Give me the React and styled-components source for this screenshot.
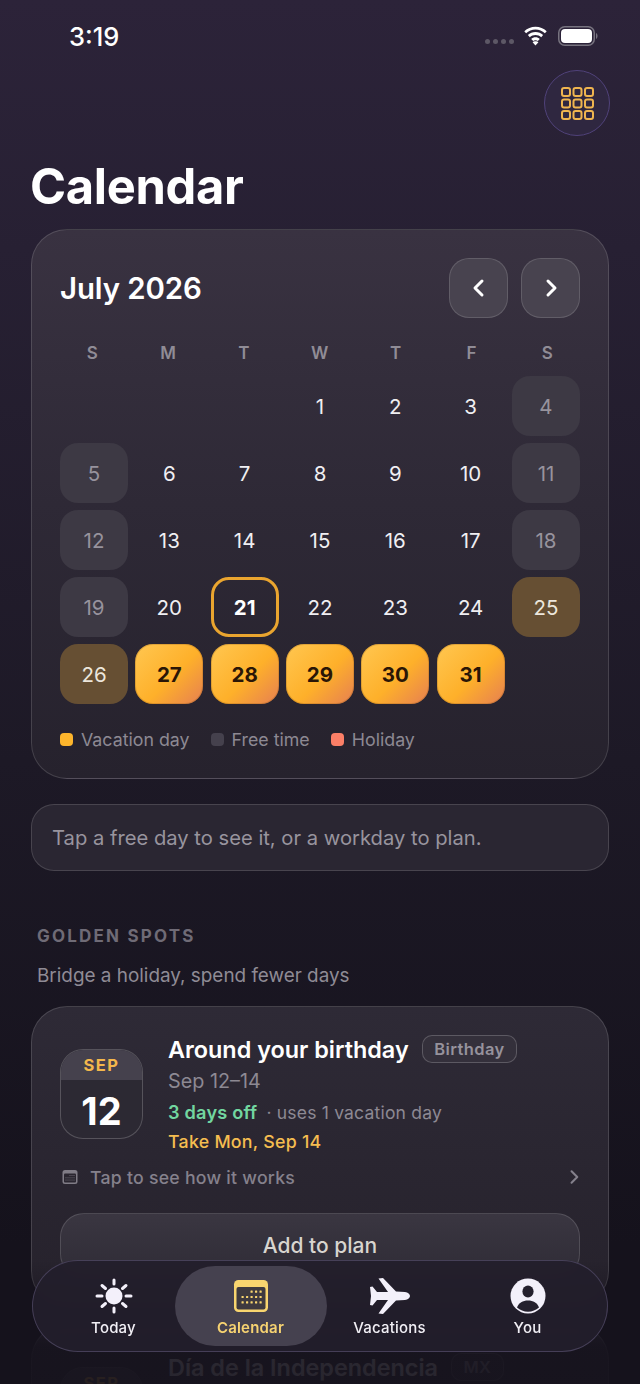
import React from "react";
import styled, { createGlobalStyle } from "styled-components";

const Global = createGlobalStyle`
  html, body { margin: 0; padding: 0; background: #15121c; }
  body { font-family: Inter, "Noto Sans", sans-serif; -webkit-font-smoothing: antialiased; }
  * { box-sizing: border-box; }
`;

const Page = styled.div`
  position: relative;
  width: 640px;
  height: 1384px;
  overflow: hidden;
  padding: 0 31px;
  background: linear-gradient(180deg, #2c2339 0%, #272033 18%, #1d1926 55%, #15121c 90%);
  color: #fff;
`;

const StatusBar = styled.div`
  height: 70px;
  margin: 0 -31px;
  padding: 2px 42px 0 69px;
  display: flex;
  align-items: center;
  justify-content: space-between;
`;
const Clock = styled.span`
  font-size: 25.5px;
  font-weight: 500;
  color: #fff;
`;
const StatusIcons = styled.div`
  display: flex;
  align-items: center;
  margin-top: -1px;
`;
const Dots = styled.div`
  display: flex;
  gap: 3px;
  margin: 12px 9px 0 0;
  i { width: 5px; height: 5px; border-radius: 50%; background: #5d5866; }
`;
const IconGap = styled.span`
  width: 10px;
`;

const HeaderRow = styled.div`
  display: flex;
  justify-content: flex-end;
  margin-right: -1px;
`;
const RoundButton = styled.div`
  width: 66px;
  height: 66px;
  border-radius: 50%;
  background: #2f2740;
  border: 1.5px solid #50427a;
  display: flex;
  align-items: center;
  justify-content: center;
`;
const Title = styled.h1`
  margin: 20px 0 11px -1px;
  font-size: 48.8px;
  line-height: 62px;
  height: 62px;
  font-weight: 700;
  letter-spacing: -0.3px;
`;

const Card = styled.section`
  border-radius: 36px;
  border: 1.5px solid rgba(255, 255, 255, 0.14);
  background: linear-gradient(180deg, #393241 0%, #2e2936 50%, #26222d 100%);
`;
const CalendarCard = styled(Card)`
  height: 550px;
  padding: 28px 28px 0;
`;
const MonthRow = styled.div`
  display: flex;
  align-items: center;
  justify-content: space-between;
  height: 60px;
`;
const Month = styled.h2`
  margin: 0;
  font-size: 29.4px;
  font-weight: 600;
  letter-spacing: -0.1px;
`;
const NavGroup = styled.div`
  display: flex;
  gap: 13px;
`;
const NavButton = styled.div`
  width: 59px;
  height: 60px;
  border-radius: 20px;
  background: #48434f;
  border: 1.5px solid rgba(255, 255, 255, 0.14);
  display: flex;
  align-items: center;
  justify-content: center;
`;
const Grid = styled.div`
  display: grid;
  grid-template-columns: repeat(7, 68px);
  column-gap: 7.33px;
`;
const WeekRow = styled(Grid)`
  column-gap: 7.83px;
  margin-left: -1.5px;
`;
const Weekday = styled.div`
  height: 58px;
  padding-top: 12px;
  display: flex;
  align-items: center;
  justify-content: center;
  font-size: 17px;
  font-weight: 600;
  color: #908c96;
  letter-spacing: 0.4px;
`;
const Days = styled(Grid)`
  row-gap: 7px;
`;
const cellStyles = {
  work: `color:#f0eff2;`,
  free: `background:#3d3944;color:#97939d;`,
  today: `border:3px solid #eaa52f;color:#fff;font-weight:700;`,
  offVac: `background:#664f33;color:#ece6dc;`,
  vac: `background:linear-gradient(135deg,#ffc751 0%,#feb02a 55%,#e67f52 100%);color:#2a1606;font-weight:700;box-shadow:inset 0 0 0 1px rgba(130,80,20,.25);`,
  empty: ``,
};
const Cell = styled.div`
  height: 60px;
  border-radius: 18px;
  display: flex;
  align-items: center;
  justify-content: center;
  font-size: 20.5px;
  ${(p) => cellStyles[p.$kind]}
`;
const Legend = styled.div`
  display: flex;
  align-items: center;
  margin-top: 24px;
  height: 22px;
`;
const LegendItem = styled.div`
  display: flex;
  align-items: center;
  gap: 8px;
  margin-right: 21px;
  font-size: 17.8px;
  color: #8d8993;
  &::before {
    content: "";
    width: 13px;
    height: 13px;
    border-radius: 4px;
    background: ${(p) => p.$color};
  }
`;
const Tip = styled.div`
  margin-top: 25px;
  height: 67px;
  border-radius: 23px;
  border: 1.5px solid rgba(255, 255, 255, 0.14);
  background: #2a2632;
  padding: 0 20px;
  display: flex;
  align-items: center;
  font-size: 20.2px;
  color: #98949e;
`;
const SectionLabel = styled.div`
  margin: 54px 0 0 6px;
  height: 22px;
  line-height: 22px;
  font-size: 17px;
  font-weight: 700;
  letter-spacing: 2.2px;
  color: #6f6b76;
`;
const SectionSub = styled.div`
  margin: 18px 0 19px 6px;
  height: 22px;
  line-height: 22px;
  font-size: 18.9px;
  color: #8f8b95;
`;
const SpotCard = styled(Card)`
  background: linear-gradient(180deg, #2e2a36 0%, #26222c 100%);
  padding: 26px 28px 28px;
  margin-bottom: 17px;
`;
const SpotTop = styled.div`
  display: flex;
  gap: 25px;
`;
const Tile = styled.div`
  margin-top: 16px;
  width: 83px;
  height: 90px;
  flex: none;
  border-radius: 23px;
  border: 1.5px solid rgba(255, 255, 255, 0.2);
  background: #2c2933;
  overflow: hidden;
  display: flex;
  flex-direction: column;
  align-items: center;
`;
const TileHead = styled.div`
  width: 100%;
  height: 30px;
  background: #45414d;
  color: #f4b84c;
  font-size: 16.5px;
  font-weight: 700;
  letter-spacing: 1.5px;
  display: flex;
  align-items: center;
  justify-content: center;
`;
const TileNum = styled.div`
  flex: 1;
  display: flex;
  align-items: center;
  padding-top: 3px;
  font-size: 38px;
  font-weight: 700;
  color: #fff;
`;
const SpotInfo = styled.div`
  display: flex;
  flex-direction: column;
`;
const TitleRow = styled.div`
  display: flex;
  align-items: center;
  gap: 13px;
  height: 32px;
`;
const SpotTitle = styled.div`
  font-size: 23.4px;
  font-weight: 600;
  color: #fff;
  white-space: nowrap;
`;
const Badge = styled.span`
  height: 28px;
  padding: 0 11.5px;
  border-radius: 10px;
  border: 1.5px solid rgba(255, 255, 255, 0.2);
  background: #34303b;
  display: flex;
  align-items: center;
  font-size: 16.5px;
  font-weight: 600;
  color: #96929c;
  letter-spacing: 0.4px;
`;
const Dates = styled.div`
  margin-top: 3px;
  font-size: 19.8px;
  line-height: 26px;
  color: #8d8993;
`;
const StatLine = styled.div`
  margin-top: 5px;
  line-height: 26px;
  font-size: 17.5px;
  color: #8d8993;
  letter-spacing: 0.2px;
  b { font-size: 18.2px; font-weight: 600; color: #72d6a0; margin-right: 9px; }
`;
const TakeLine = styled.div`
  margin-top: 3px;
  line-height: 26px;
  font-size: 17.8px;
  font-weight: 500;
  color: #f5bd50;
  letter-spacing: 0.25px;
`;
const HowRow = styled.div`
  margin-top: 7px;
  height: 30px;
  display: flex;
  align-items: center;
  gap: 12px;
  padding-left: 2px;
  font-size: 17.7px;
  font-weight: 500;
  color: #85818c;
  letter-spacing: 0.25px;
  svg:last-child { margin-left: auto; margin-right: -3px; }
`;
const AddButton = styled.div`
  margin-top: 21px;
  height: 65px;
  border-radius: 24px;
  border: 1.5px solid rgba(255, 255, 255, 0.14);
  background: linear-gradient(180deg, #3a3641, #2f2c36);
  display: flex;
  align-items: center;
  justify-content: center;
  font-size: 21px;
  font-weight: 500;
  color: #d8d5cf;
`;
const BottomFade = styled.div`
  position: absolute;
  left: 0;
  right: 0;
  bottom: 0;
  height: 124px;
  background: linear-gradient(180deg, rgba(21, 18, 28, 0) 0%, rgba(21, 18, 28, 0.9) 70%, rgba(21, 18, 28, 0.92) 100%);
`;
const TabBar = styled.nav`
  position: absolute;
  left: 32px;
  top: 1260px;
  width: 576px;
  height: 92px;
  border-radius: 46px;
  border: 1.5px solid rgba(120, 110, 150, 0.42);
  background: rgba(34, 30, 43, 0.93);
  backdrop-filter: blur(6px);
  display: grid;
  grid-template-columns: 122px 152px 126px 150px;
  padding: 5px 0 5px 19.5px;
`;
const Tab = styled.div`
  border-radius: 40px;
  display: flex;
  flex-direction: column;
  align-items: center;
  justify-content: flex-start;
  padding-top: 12px;
  gap: 4px;
  height: 80px;
  font-size: 15px;
  font-weight: 500;
  letter-spacing: 0.2px;
  color: ${(p) => (p.$active ? "#f6d271" : "#f1eff5")};
  background: ${(p) => (p.$active ? "#45414f" : "transparent")};
  ${(p) => p.$active && "font-weight: 600;"}
  svg { height: 36px; flex: none; }
`;

const Wifi = () => (
  <svg width="25" height="20" viewBox="0 0 25 20" fill="#fff">
    <path d="M12.5 3.6c3.6 0 6.9 1.4 9.4 3.7l1.8-2.1C20.7 2.4 16.8.7 12.5.7S4.3 2.4 1.300 5.200l1.800 2.100c2.500-2.300 5.800-3.700 9.400-3.700z" />
    <path d="M12.500 9c2.200 0 4.200.8 5.700 2.200l1.900-2.100c-2-1.900-4.700-3-7.600-3s-5.600 1.100-7.600 3l1.900 2.100C8.300 9.800 10.300 9 12.500 9z" />
    <path d="M12.500 14.200c.9 0 1.700.3 2.300.9l2-2.200c-1.100-1.100-2.600-1.700-4.300-1.700s-3.200.6-4.300 1.700l2 2.200c.6-.6 1.400-.9 2.300-.9z" />
    <path d="M12.500 19.500l2.900-3.200c-.7-.7-1.800-1-2.900-1s-2.200.3-2.900 1z" />
  </svg>
);
const Battery = () => (
  <svg width="40" height="20" viewBox="0 0 40 20">
    <rect x="0.750" y="0.750" width="35.500" height="18.500" rx="6" fill="none" stroke="#77737f" strokeWidth="1.500" />
    <rect x="3" y="3" width="31" height="14" rx="4" fill="#fff" />
    <path d="M38 7c1 .5 1.500 1.600 1.500 3s-.5 2.500-1.500 3z" fill="#77737f" />
  </svg>
);
const GridIcon = () => (
  <svg width="33" height="33" viewBox="0 0 33 33" fill="none" stroke="#efb54f" strokeWidth="2">
    {[1, 12.500, 24].map((y) =>
      [1, 12.500, 24].map((x) => <rect key={`${x}-${y}`} x={x} y={y} width="8" height="8" rx="2" />)
    )}
  </svg>
);
const Chevron = ({ left, size = 22, color = "#fff", w = 3 }) => (
  <svg width={size} height={size} viewBox="0 0 22 22" fill="none" stroke={color} strokeWidth={w} strokeLinecap="round" strokeLinejoin="round">
    <path d={left ? "M14 4l-7 7 7 7" : "M8 4l7 7-7 7"} />
  </svg>
);
const dotsGrid = (cols, rows, x0, y0, dx, dy, r, fill, skip = 0) => {
  const out = [];
  for (let j = 0; j < rows; j++)
    for (let i = 0; i < cols; i++) {
      if (j === 0 && i < skip) continue;
      out.push(<rect key={`${i}${j}`} x={x0 + i * dx} y={y0 + j * dy} width={r} height={r} rx="0.500" fill={fill} />);
    }
  return out;
};
const SmallCalendar = () => (
  <svg width="16" height="16" viewBox="0 0 16 16">
    <rect x="0.500" y="1" width="15" height="14" rx="2.500" fill="#807c86" />
    <rect x="2" y="4.500" width="12" height="9" rx="1" fill="#2a2630" />
    {dotsGrid(5, 3, 3.500, 6, 2, 2.200, 1, "#807c86", 2)}
  </svg>
);
const SunIcon = () => (
  <svg width="40" height="36" viewBox="0 0 40 36" fill="#f3f0fa" stroke="#f3f0fa" strokeLinecap="round">
    <circle cx="20" cy="18" r="8.500" stroke="none" />
    <g strokeWidth="3" fill="none">
      <path d="M20 2v4M20 30v4M3 18h5M32 18h5M8 7.500l3.500 3M28.500 25.500l3.500 3M32 7.500l-3.500 3M11.500 25.500l-3.500 3" />
    </g>
  </svg>
);
const CalendarIcon = () => (
  <svg width="36" height="36" viewBox="0 0 36 36">
    <rect x="1" y="2" width="34" height="32" rx="4.500" fill="#f8d56f" />
    <rect x="3.500" y="9" width="29" height="22.500" rx="2" fill="#3e3a3f" />
    {dotsGrid(5, 3, 8.500, 12.500, 4.500, 5.400, 2.200, "#f8d56f", 2)}
  </svg>
);
const PlaneIcon = () => (
  <svg width="40" height="36" viewBox="0 0 40 36" fill="#f3f0fa">
    <path d="M0 9 L2.500 8.500 L7 14 L18 14 L8.500 0.500 L13 0 L26 13.500 L35 14 C38 14.200 40 16.300 40 18 C40 19.700 38 21.800 35 22 L26 22.500 L13 36 L8.500 35.500 L18 22 L7 22 L2.500 27.500 L0 27 L1 18 Z" />
  </svg>
);
const PersonIcon = () => (
  <svg width="36" height="36" viewBox="0 0 36 36">
    <circle cx="18" cy="18" r="17.500" fill="#f3f0fa" />
    <ellipse cx="18" cy="13.500" rx="5.600" ry="6" fill="#24202d" />
    <path d="M7 29.500c1.500-4.500 6-7 11-7s9.500 2.500 11 7c-3 2.700-6.800 4.200-11 4.200s-8-1.500-11-4.200z" fill="#24202d" />
  </svg>
);

const rows = [
  ["", "", "", "1", "2", "3", "4"],
  ["5", "6", "7", "8", "9", "10", "11"],
  ["12", "13", "14", "15", "16", "17", "18"],
  ["19", "20", "21", "22", "23", "24", "25"],
  ["26", "27", "28", "29", "30", "31", ""],
];
const kindOf = (d, i) => {
  if (!d) return "empty";
  const n = Number(d);
  if (n === 21) return "today";
  if (n === 25 || n === 26) return "offVac";
  if (n >= 27) return "vac";
  if (i === 0 || i === 6) return "free";
  return "work";
};

export default function App() {
  return (
    <Page>
      <Global />
      <StatusBar>
        <Clock>3:19</Clock>
        <StatusIcons>
          <Dots><i /><i /><i /><i /></Dots>
          <Wifi />
          <IconGap />
          <Battery />
        </StatusIcons>
      </StatusBar>
      <HeaderRow>
        <RoundButton><GridIcon /></RoundButton>
      </HeaderRow>
      <Title>Calendar</Title>
      <CalendarCard>
        <MonthRow>
          <Month>July 2026</Month>
          <NavGroup>
            <NavButton><Chevron left /></NavButton>
            <NavButton><Chevron /></NavButton>
          </NavGroup>
        </MonthRow>
        <WeekRow>
          {["S", "M", "T", "W", "T", "F", "S"].map((d, i) => <Weekday key={i}>{d}</Weekday>)}
        </WeekRow>
        <Days>
          {rows.flatMap((row, r) =>
            row.map((d, i) => <Cell key={`${r}-${i}`} $kind={kindOf(d, i)}>{d}</Cell>)
          )}
        </Days>
        <Legend>
          <LegendItem $color="#fdb52c">Vacation day</LegendItem>
          <LegendItem $color="#45414d">Free time</LegendItem>
          <LegendItem $color="#fb7f67">Holiday</LegendItem>
        </Legend>
      </CalendarCard>
      <Tip>Tap a free day to see it, or a workday to plan.</Tip>
      <SectionLabel>GOLDEN SPOTS</SectionLabel>
      <SectionSub>Bridge a holiday, spend fewer days</SectionSub>
      <SpotCard>
        <SpotTop>
          <Tile>
            <TileHead>SEP</TileHead>
            <TileNum>12</TileNum>
          </Tile>
          <SpotInfo>
            <TitleRow>
              <SpotTitle>Around your birthday</SpotTitle>
              <Badge>Birthday</Badge>
            </TitleRow>
            <Dates>Sep 12–14</Dates>
            <StatLine><b>3 days off</b>· uses 1 vacation day</StatLine>
            <TakeLine>Take Mon, Sep 14</TakeLine>
          </SpotInfo>
        </SpotTop>
        <HowRow>
          <SmallCalendar />
          Tap to see how it works
          <Chevron size={18} color="#85818c" w={2.500} />
        </HowRow>
        <AddButton>Add to plan</AddButton>
      </SpotCard>
      <SpotCard>
        <SpotTop>
          <Tile>
            <TileHead>SEP</TileHead>
            <TileNum>16</TileNum>
          </Tile>
          <SpotInfo>
            <TitleRow>
              <SpotTitle>Día de la Independencia</SpotTitle>
              <Badge>MX</Badge>
            </TitleRow>
          </SpotInfo>
        </SpotTop>
      </SpotCard>
      <BottomFade />
      <TabBar>
        <Tab><SunIcon />Today</Tab>
        <Tab $active><CalendarIcon />Calendar</Tab>
        <Tab><PlaneIcon />Vacations</Tab>
        <Tab><PersonIcon />You</Tab>
      </TabBar>
    </Page>
  );
}
